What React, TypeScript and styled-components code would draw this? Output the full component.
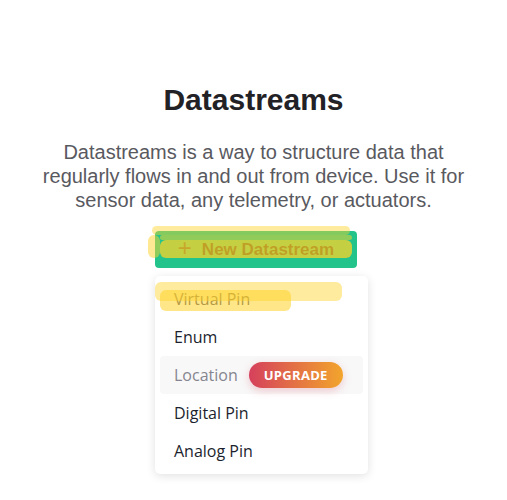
import React from 'react'
import styled, { createGlobalStyle } from 'styled-components'

const GlobalStyle = createGlobalStyle`
  html, body {
    margin: 0;
    padding: 0;
    background: #ffffff;
  }
`

const Page = styled.div`
  width: 507px;
  height: 500px;
  display: flex;
  flex-direction: column;
  align-items: center;
  padding-top: 83px;
  box-sizing: border-box;
  font-family: 'Liberation Sans', Arial, sans-serif;
`

const Title = styled.h1`
  margin: 0;
  font-size: 30px;
  line-height: 34px;
  font-weight: 700;
  color: #222226;
`

const Description = styled.p`
  margin: 23px 0 0;
  width: 430px;
  text-align: center;
  font-size: 20px;
  line-height: 24px;
  color: #595960;
`

const ButtonArea = styled.div`
  position: relative;
  margin: 19px 0 0 16px;
  display: flex;
  flex-direction: column;
  align-items: flex-start;
  width: 213px;
`

const AddButton = styled.button`
  width: 202px;
  height: 37px;
  border: none;
  border-radius: 4px;
  background: #22c48c;
  display: flex;
  align-items: center;
  justify-content: center;
  gap: 10px;
  padding: 0;
  font-family: 'Liberation Sans', Arial, sans-serif;
  font-size: 17px;
  font-weight: 700;
  color: #0e0d20;
`

const Plus = styled.span`
  font-weight: 400;
  font-size: 24px;
  line-height: 1;
  margin-top: -3px;
  color: #2a2a35;
`

const Menu = styled.ul`
  list-style: none;
  margin: 8px 0 0;
  padding: 4px 5px;
  width: 213px;
  box-sizing: border-box;
  background: #ffffff;
  border-radius: 5px;
  box-shadow: 0 2px 10px rgba(0, 0, 0, 0.12);
  font-family: 'Open Sans', 'Noto Sans', sans-serif;
`

const Item = styled.li<{ $tone?: 'muted' | 'marked'; $locked?: boolean }>`
  height: 38px;
  display: flex;
  align-items: center;
  gap: 11px;
  padding-left: 14px;
  border-radius: 4px;
  font-size: 16px;
  color: ${({ $tone }) => ($tone === 'muted' ? '#85858f' : $tone === 'marked' ? '#55556a' : '#1c1f2e')};
  background: ${({ $locked }) => ($locked ? '#f8f8f8' : 'transparent')};
`

const Badge = styled.span`
  display: inline-flex;
  align-items: center;
  height: 26px;
  padding: 0 15px;
  border-radius: 13px;
  background: linear-gradient(90deg, #d5405c 0%, #f2a52c 100%);
  box-shadow: 0 3px 8px rgba(213, 64, 92, 0.25);
  color: #ffffff;
  font-size: 13px;
  font-weight: 700;
  letter-spacing: 0.3px;
`

const Marker = styled.div<{ $top: number; $left: number; $w: number; $h: number; $a: number }>`
  position: absolute;
  top: ${({ $top }) => $top}px;
  left: ${({ $left }) => $left}px;
  width: ${({ $w }) => $w}px;
  height: ${({ $h }) => $h}px;
  background: rgba(255, 210, 40, ${({ $a }) => $a});
  border-radius: 6px;
  pointer-events: none;
`

export default function App() {
  return (
    <>
      <GlobalStyle />
      <Page>
        <Title>Datastreams</Title>
        <Description>
          Datastreams is a way to structure data that regularly flows in and out from device. Use it for
          sensor data, any telemetry, or actuators.
        </Description>
        <ButtonArea>
          <AddButton>
            <Plus>+</Plus>
            New Datastream
          </AddButton>
          <Menu>
            <Item $tone="marked">Virtual Pin</Item>
            <Item>Enum</Item>
            <Item $tone="muted" $locked>
              Location
              <Badge>UPGRADE</Badge>
            </Item>
            <Item>Digital Pin</Item>
            <Item>Analog Pin</Item>
          </Menu>
          {/* highlighter strokes */}
          <Marker $top={-5} $left={-3} $w={198} $h={9} $a={0.45} />
          <Marker $top={4} $left={-7} $w={12} $h={23} $a={0.5} />
          <Marker $top={4} $left={5} $w={192} $h={5} $a={0.5} />
          <Marker $top={9} $left={5} $w={192} $h={18} $a={0.74} />
          <Marker $top={51} $left={0} $w={187} $h={19} $a={0.45} />
          <Marker $top={59} $left={5} $w={131} $h={21} $a={0.55} />
        </ButtonArea>
      </Page>
    </>
  )
}
